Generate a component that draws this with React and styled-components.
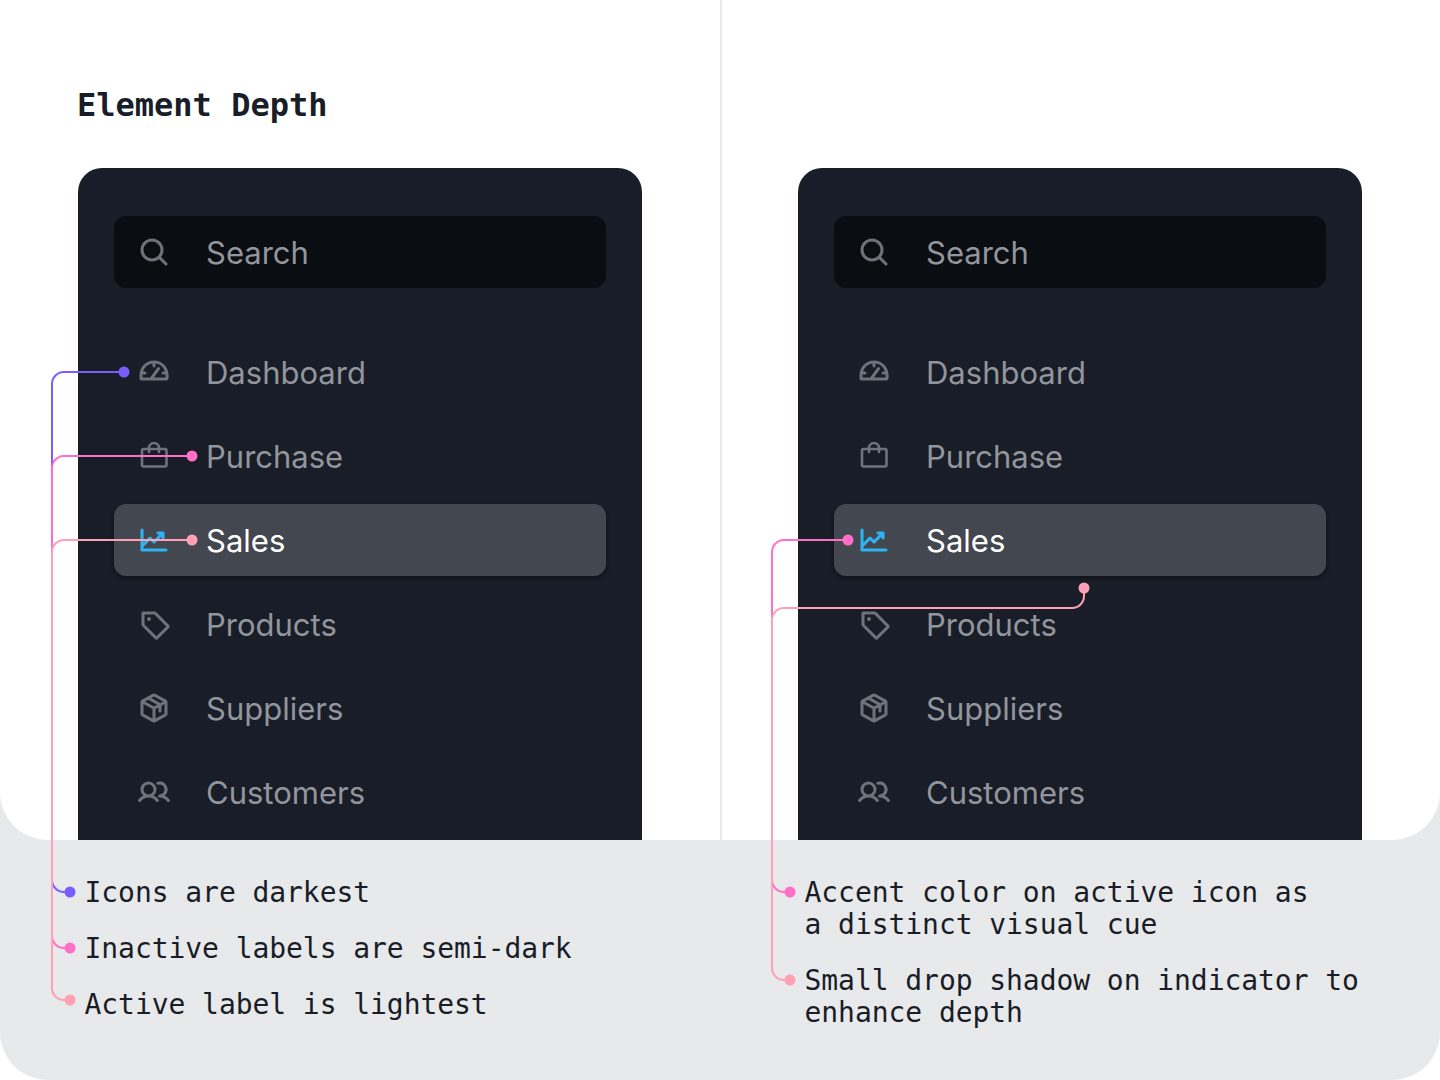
import React from "react";
import styled, { createGlobalStyle } from "styled-components";
import {
  PiMagnifyingGlassBold,
  PiGaugeBold,
  PiChartLineUpBold,
  PiTagBold,
  PiPackageBold,
  PiUsersBold,
} from "react-icons/pi";

const Global = createGlobalStyle`
  html, body { margin: 0; padding: 0; background: #fff; }
  * { box-sizing: border-box; }
`;

const MONO = `"DejaVu Sans Mono", "Liberation Mono", monospace`;
const SANS = `Inter, "Noto Sans", sans-serif`;

const Page = styled.div`
  position: relative;
  width: 1440px;
  height: 1080px;
  overflow: hidden;
  background: #fff;
`;
const Sheet = styled.div`
  width: 1440px;
  height: 1080px;
  background: #e8e9eb;
  border-radius: 0 0 48px 48px;
  display: flex;
  flex-direction: column;
`;
const Top = styled.div`
  height: 840px;
  background: #fff;
  border-radius: 0 0 48px 48px;
  display: grid;
  grid-template-columns: 720px 720px;
  overflow: hidden;
`;
const Col = styled.section`
  padding: 0 78px;
  height: 840px;
  display: flex;
  flex-direction: column;
  border-left: ${(p) => (p.$divided ? "2px solid #e8e9eb" : "none")};
  padding-left: ${(p) => (p.$divided ? "76px" : "78px")};
`;
const HeadingSlot = styled.div`
  height: 168px;
  padding-top: 84px;
`;
const Heading = styled.h1`
  margin: 0 0 0 -1px;
  font: 700 32px/42px ${MONO};
  color: #191d27;
`;
const Card = styled.div`
  flex: 1;
  background: #191d27;
  border-radius: 24px 24px 0 0;
  padding: 48px 36px 0;
  display: flex;
  flex-direction: column;
`;
const Search = styled.div`
  height: 72px;
  border-radius: 12px;
  background: #0a0d11;
  display: flex;
  align-items: center;
  padding-left: 24px;
  gap: 36px;
  margin-bottom: 48px;
  color: #92959c;
  font: 400 31px/1 ${SANS};
  svg { color: #6f727a; flex: none; }
`;
const Nav = styled.nav`
  display: flex;
  flex-direction: column;
  gap: 12px;
`;
const Item = styled.div`
  height: 72px;
  border-radius: 12px;
  display: flex;
  align-items: center;
  padding-left: 24px;
  gap: 36px;
  font: 400 31px/1 ${SANS};
  color: ${(p) => (p.$active ? "#fff" : "#92959c")};
  background: ${(p) => (p.$active ? "#434750" : "transparent")};
  box-shadow: ${(p) => (p.$active ? "0 2px 4px rgba(0,0,0,.45)" : "none")};
  svg { color: ${(p) => (p.$active ? "#2db5f2" : "#6f727a")}; flex: none; }
`;
const Bottom = styled.div`
  height: 240px;
  display: grid;
  grid-template-columns: 720px 720px;
`;
const Notes = styled.ul`
  list-style: none;
  margin: 0;
  padding: 37px 60px 0 84.5px;
  display: flex;
  flex-direction: column;
  gap: 24px;
`;
const Note = styled.li`
  font: 400 28px/32px ${MONO};
  letter-spacing: -0.06px;
  color: #191d27;
`;
const Overlay = styled.svg`
  position: absolute;
  inset: 0;
  pointer-events: none;
`;

const BagIcon = ({ size = 32 }) => (
  <svg width={size} height={size} viewBox="0 0 32 32" fill="none" stroke="currentColor" strokeWidth="2.6" strokeLinejoin="round" strokeLinecap="round">
    <rect x="4" y="9" width="24.5" height="17.5" rx="1.5" />
    <path d="M11 12V8a5 5 0 0 1 10 0v4" />
  </svg>
);

const items = [
  ["Dashboard", PiGaugeBold],
  ["Purchase", BagIcon],
  ["Sales", PiChartLineUpBold, true],
  ["Products", PiTagBold],
  ["Suppliers", PiPackageBold],
  ["Customers", PiUsersBold],
];

const Panel = () => (
  <Card>
    <Search>
      <PiMagnifyingGlassBold size={32} />
      <span>Search</span>
    </Search>
    <Nav>
      {items.map(([label, Icon, active]) => (
        <Item key={label} $active={active}>
          <Icon size={32} />
          <span>{label}</span>
        </Item>
      ))}
    </Nav>
  </Card>
);

const PURPLE = "#7a5cff";
const PINK = "#ff6ec7";
const SALMON = "#ffa0b4";

const Wire = ({ d, color, dots }) => (
  <g>
    <path d={d} fill="none" stroke={color} strokeWidth="2" />
    {dots.map(([x, y]) => (
      <circle key={x + "-" + y} cx={x} cy={y} r="5.5" fill={color} />
    ))}
  </g>
);

export default function App() {
  return (
    <Page>
      <Global />
      <Sheet>
        <Top>
          <Col>
            <HeadingSlot>
              <Heading>Element Depth</Heading>
            </HeadingSlot>
            <Panel />
          </Col>
          <Col $divided>
            <HeadingSlot />
            <Panel />
          </Col>
        </Top>
        <Bottom>
          <Notes>
            <Note>Icons are darkest</Note>
            <Note>Inactive labels are semi-dark</Note>
            <Note>Active label is lightest</Note>
          </Notes>
          <Notes>
            <Note>Accent color on active icon as<br />a distinct visual cue</Note>
            <Note>Small drop shadow on indicator to<br />enhance depth</Note>
          </Notes>
        </Bottom>
      </Sheet>
      <Overlay width="1440" height="1080" viewBox="0 0 1440 1080">
        <Wire color={PURPLE} d="M124 372H64a12 12 0 0 0-12 12V880a12 12 0 0 0 12 12h6" dots={[[124, 372], [70, 892]]} />
        <Wire color={PINK} d="M192 456H64a12 12 0 0 0-12 12V936a12 12 0 0 0 12 12h6" dots={[[192, 456], [70, 948]]} />
        <Wire color={SALMON} d="M192 540H64a12 12 0 0 0-12 12V988a12 12 0 0 0 12 12h6" dots={[[192, 540], [70, 1000]]} />
        <Wire color={PINK} d="M848 540H784a12 12 0 0 0-12 12V880a12 12 0 0 0 12 12h6" dots={[[848, 540], [790, 892]]} />
        <Wire color={SALMON} d="M1084 588v8a12 12 0 0 1-12 12H784a12 12 0 0 0-12 12V968a12 12 0 0 0 12 12h6" dots={[[1084, 588], [790, 980]]} />
      </Overlay>
    </Page>
  );
}
